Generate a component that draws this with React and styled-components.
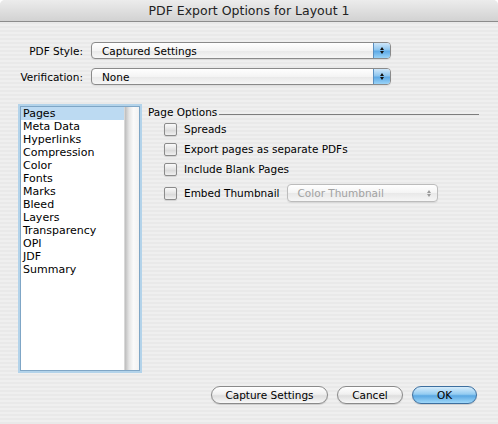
import React from 'react';
import styled, { createGlobalStyle } from 'styled-components';

const GlobalStyle = createGlobalStyle`
    body {
        margin: 0;
        font-family: "DejaVu Sans", "Liberation Sans", sans-serif;
        color: #000;
    }
`

const Window = styled.div`
    width: 498px;
    height: 424px;
    overflow: hidden;
    background: repeating-linear-gradient(to bottom, #efefef 0 2px, #e9e9e9 2px 4px);
    border-radius: 5px 5px 0 0;
`

const TitleBar = styled.div`
    height: 21px;
    border-bottom: 1px solid #8c8c8c;
    background: linear-gradient(to bottom, #ececec, #d2d2d2);
    display: flex;
    align-items: center;
    justify-content: center;
    font-size: 12.5px;
    color: #222;
`

const Form = styled.div`
    margin-top: 20px;
    display: grid;
    grid-template-columns: 83px 300px;
    column-gap: 8px;
    row-gap: 9px;
    align-items: center;
`

const Label = styled.label`
    text-align: right;
    font-size: 10.5px;
`

const Popup = styled.div`
    height: 15px;
    display: flex;
    align-items: center;
    border: 1px solid ${p => p.disabled ? '#bcbcbc' : '#8a8a8a'};
    border-radius: 4px;
    background: linear-gradient(to bottom, #ffffff, #f4f4f4 50%, #e8e8e8 51%, #f6f6f6);
    font-size: 10.5px;
    color: ${p => p.disabled ? '#a2a2a2' : '#000'};
    overflow: hidden;
    width: ${p => p.width || 'auto'};
    box-shadow: 0 1px 1px rgba(0,0,0,0.08);
`

const PopupText = styled.span`
    flex: 1;
    padding-left: 10px;
    white-space: nowrap;
`

const Stepper = styled.span`
    width: 16px;
    height: 100%;
    display: flex;
    flex-direction: column;
    align-items: center;
    justify-content: center;
    gap: 1px;
    border-left: 1px solid ${p => p.blue ? '#5a8fc0' : 'transparent'};
    background: ${p => p.blue
        ? 'linear-gradient(to bottom, #cfe7fa, #8ec6ef 45%, #5eaae6 55%, #9ad3f7)'
        : 'transparent'};
`

const Arrow = styled.span`
    width: 0;
    height: 0;
    border-left: 2.5px solid transparent;
    border-right: 2.5px solid transparent;
    ${p => p.up
        ? `border-bottom: 3px solid ${p.color};`
        : `border-top: 3px solid ${p.color};`}
`

const Main = styled.div`
    margin-top: 21px;
    display: flex;
    align-items: flex-start;
`

const ListBox = styled.div`
    margin-left: 20px;
    width: 118px;
    height: 263px;
    border: 1px solid #7fa6c6;
    box-shadow: 0 0 0 2px #b3d3ea;
    background: #fff;
    display: flex;
`

const List = styled.ul`
    list-style: none;
    margin: 0;
    padding: 0;
    flex: 1;
    font-size: 11px;
`

const Item = styled.li`
    height: 13px;
    line-height: 13px;
    padding-left: 2px;
    background: ${p => p.selected ? '#bcdaf2' : 'transparent'};
    white-space: nowrap;
`

const ScrollTrack = styled.div`
    width: 14px;
    border-left: 1px solid #d8d8d8;
    background: linear-gradient(to right, #bdbdbd, #e6e6e6 30%, #fafafa 60%, #f2f2f2);
`

const Panel = styled.div`
    margin-left: 8px;
    width: 331px;
    margin-top: -1px;
`

const GroupHeader = styled.div`
    display: flex;
    align-items: center;
    font-size: 10.5px;
    height: 13px;
`

const GroupLine = styled.span`
    flex: 1;
    height: 0;
    border-top: 1px solid #7d7d7d;
    margin-left: 2px;
    margin-top: 6px;
`

const Options = styled.div`
    padding-left: 16px;
    padding-top: 1px;
`

const OptionRow = styled.div`
    display: flex;
    align-items: center;
    height: ${p => p.tall ? '24px' : '20px'};
    font-size: 10.5px;
    ${p => p.tall && 'padding-top: 2px;'}
`

const Box = styled.span`
    width: 11px;
    height: 11px;
    border: 1px solid #8b8b8b;
    border-radius: 2px;
    background: linear-gradient(to bottom, #fafafa, #e2e2e2 50%, #d6d6d6 51%, #f0f0f0);
    margin-right: 7px;
    flex-shrink: 0;
    box-shadow: 0 1px 1px rgba(0,0,0,0.12);
`

const ThumbPopup = styled(Popup)`
    margin-left: 7px;
    height: 16px;
`

const Buttons = styled.div`
    margin-top: 15px;
    display: flex;
    justify-content: flex-end;
    gap: 9px;
    padding-right: 21px;
`

const Button = styled.button`
    height: 18px;
    padding: 0;
    width: ${p => p.width};
    border-radius: 9px;
    font-family: inherit;
    font-size: 10.5px;
    color: #000;
    border: 1px solid ${p => p.primary ? '#3d6f9f' : '#8a8a8a'};
    background: ${p => p.primary
        ? 'linear-gradient(to bottom, #d6ecfb, #94ccf1 45%, #5ba8e2 55%, #9fd8fa)'
        : 'linear-gradient(to bottom, #ffffff, #f0f0f0 45%, #dedede 55%, #f8f8f8)'};
    box-shadow: 0 1px 1px rgba(0,0,0,0.15);
`

const sections = ['Pages', 'Meta Data', 'Hyperlinks', 'Compression', 'Color', 'Fonts', 'Marks', 'Bleed', 'Layers', 'Transparency', 'OPI', 'JDF', 'Summary']

const Stepper2 = ({ blue, color }) => (
    <Stepper blue={blue}>
        <Arrow up color={color} />
        <Arrow color={color} />
    </Stepper>
)

const App = () => {
    return (
        <Window>
            <GlobalStyle />
            <TitleBar>PDF Export Options for Layout 1</TitleBar>

            <Form>
                <Label>PDF Style:</Label>
                <Popup>
                    <PopupText>Captured Settings</PopupText>
                    <Stepper2 blue color="#111" />
                </Popup>
                <Label>Verification:</Label>
                <Popup>
                    <PopupText>None</PopupText>
                    <Stepper2 blue color="#111" />
                </Popup>
            </Form>

            <Main>
                <ListBox>
                    <List>
                        {sections.map((s, i) => (
                            <Item key={s} selected={i === 0}>{s}</Item>
                        ))}
                    </List>
                    <ScrollTrack />
                </ListBox>

                <Panel>
                    <GroupHeader>
                        Page Options
                        <GroupLine />
                    </GroupHeader>
                    <Options>
                        <OptionRow><Box />Spreads</OptionRow>
                        <OptionRow><Box />Export pages as separate PDFs</OptionRow>
                        <OptionRow><Box />Include Blank Pages</OptionRow>
                        <OptionRow tall>
                            <Box />Embed Thumbnail
                            <ThumbPopup disabled width="149px">
                                <PopupText>Color Thumbnail</PopupText>
                                <Stepper2 color="#999" />
                            </ThumbPopup>
                        </OptionRow>
                    </Options>
                </Panel>
            </Main>

            <Buttons>
                <Button width="117px">Capture Settings</Button>
                <Button width="66px">Cancel</Button>
                <Button primary width="65px">OK</Button>
            </Buttons>
        </Window>
    )
}

export default App
